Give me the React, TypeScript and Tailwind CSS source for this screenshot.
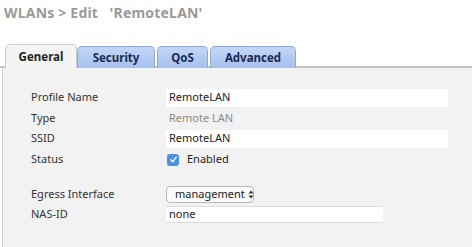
import React from "react";

export default function App() {
  const font = { fontFamily: '"Noto Sans", "Open Sans", sans-serif' };
  return (
    <div className="w-[472px] h-[247px] bg-white overflow-hidden relative" style={font}>
      <div className="pl-[4px] pt-[4px] text-[14px] font-bold text-[#9a9a9a] leading-[18px] tracking-[0.2px] whitespace-pre">
        WLANs &gt; Edit   'RemoteLAN'
      </div>
      <div className="mt-[22px] flex items-end pl-[5px] h-[24px] relative">
        <div className="absolute left-0 right-0 bottom-0 h-[2px] bg-[#c4c4c4]" />
        <div className="relative z-10 w-[72px] h-[24px] bg-[#f4f4f4] border border-b-0 border-[#d0d0d0] rounded-t-[5px] flex items-center justify-center text-[11.5px] font-bold text-[#222]">
          General
        </div>
        <div className="relative z-10 w-[78px] h-[22px] bg-gradient-to-b from-[#c3d6f7] to-[#a6c1ee] border border-b-0 border-[#8da8d8] rounded-t-[5px] flex items-center justify-center text-[11.5px] font-bold text-[#1b2a50]">
          Security
        </div>
        <div className="relative z-10 ml-[2px] w-[51px] h-[22px] bg-gradient-to-b from-[#c3d6f7] to-[#a6c1ee] border border-b-0 border-[#8da8d8] rounded-t-[5px] flex items-center justify-center text-[11.5px] font-bold text-[#1b2a50]">
          QoS
        </div>
        <div className="relative z-10 ml-[2px] w-[86px] h-[22px] bg-gradient-to-b from-[#c3d6f7] to-[#a6c1ee] border border-b-0 border-[#8da8d8] rounded-t-[5px] flex items-center justify-center text-[11.5px] font-bold text-[#1b2a50]">
          Advanced
        </div>
      </div>
      <div className="ml-[2px] h-[200px] bg-[#f2f2f2] border-l border-[#cfcfcf] pt-[20px] text-[11px] text-[#333]">
        <div className="flex items-center h-[19px]">
          <div className="w-[163px] pl-[28px]">Profile Name</div>
          <div className="w-[282px] h-[18px] bg-white flex items-center pl-[3px] text-[#222]">RemoteLAN</div>
        </div>
        <div className="flex items-center h-[22px]">
          <div className="w-[163px] pl-[28px]">Type</div>
          <div className="pl-[3px] text-[#8a8a8a]">Remote LAN</div>
        </div>
        <div className="flex items-center h-[19px]">
          <div className="w-[163px] pl-[28px]">SSID</div>
          <div className="w-[282px] h-[18px] bg-white flex items-center pl-[3px] text-[#222]">RemoteLAN</div>
        </div>
        <div className="flex items-center h-[23px]">
          <div className="w-[163px] pl-[28px]">Status</div>
          <div className="flex items-center gap-[8px] text-[#222]">
            <div className="w-[12px] h-[12px] ml-[1px] rounded-[3px] bg-[#4a90e2] flex items-center justify-center">
              <svg width="9" height="9" viewBox="0 0 10 10">
                <path d="M2 5.2 L4.2 7.4 L8 2.6" stroke="white" strokeWidth="1.6" fill="none" strokeLinecap="round" strokeLinejoin="round" />
              </svg>
            </div>
            <span>Enabled</span>
          </div>
        </div>
        <div className="h-[13px]" />
        <div className="flex items-center h-[20px]">
          <div className="w-[163px] pl-[28px]">Egress Interface</div>
          <div className="w-[88px] h-[17px] bg-[#fafafa] border border-[#b8b8b8] rounded-[4px] flex items-center pl-[8px] text-[#222] whitespace-nowrap">
            management
            <svg width="6" height="9" viewBox="0 0 6 9" className="ml-[3px] shrink-0">
              <path d="M0.5 3.5 L3 0.5 L5.5 3.5 Z M0.5 5.5 L3 8.5 L5.5 5.5 Z" fill="#333" />
            </svg>
          </div>
        </div>
        <div className="flex items-center h-[21px]">
          <div className="w-[163px] pl-[28px]">NAS-ID</div>
          <div className="w-[217px] h-[17px] bg-white border-t border-b border-[#dcdcdc] flex items-center pl-[3px] text-[#222]">none</div>
        </div>
      </div>
    </div>
  );
}
